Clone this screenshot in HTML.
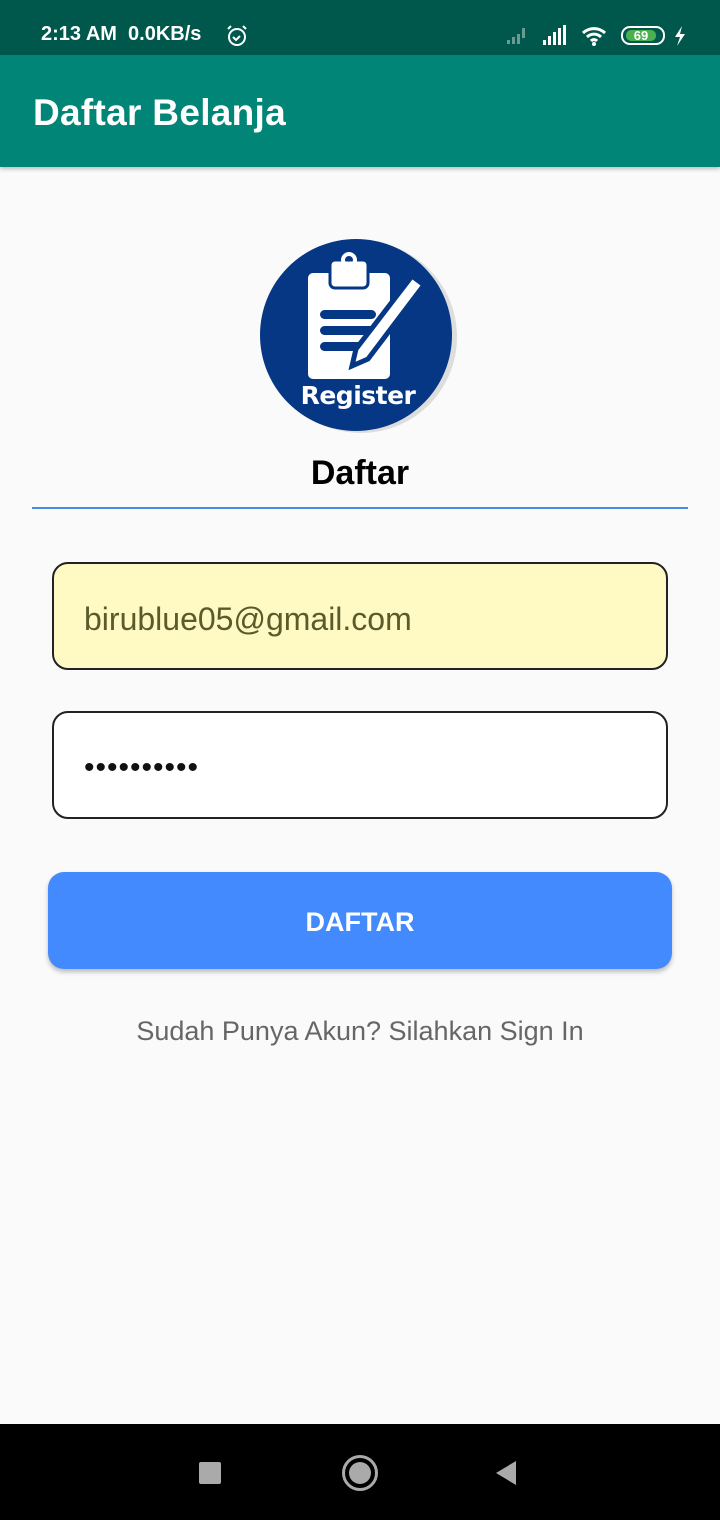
<!DOCTYPE html>
<html><head><meta charset="utf-8"><style>
*{margin:0;padding:0;box-sizing:border-box}
body{width:720px;height:1520px;background:#fafafa;font-family:"Liberation Sans",sans-serif;position:relative;overflow:hidden}
.sb{position:absolute;top:0;left:0;width:720px;height:55px;background:#00574b;color:#fff;font-weight:bold;font-size:20px}
.ab{position:absolute;top:55px;left:0;width:720px;height:112px;background:#008577;box-shadow:0 2px 4px rgba(0,0,0,.25)}
.ab span{position:absolute;left:33px;top:37px;color:#fff;font-size:37px;font-weight:bold;letter-spacing:0.3px}
.field{position:absolute;left:52px;width:616px;height:108px;border:2px solid #222;border-radius:16px;font-size:32px;padding-left:30px;line-height:110px}
.nav{position:absolute;top:1424px;left:0;width:720px;height:96px;background:#000}
</style></head><body>
<div class="sb">
<span style="position:absolute;left:41px;top:23px">2:13 AM&nbsp; 0.0KB/s</span>
<svg style="position:absolute;left:225px;top:24px" width="24" height="24" viewBox="0 0 24 24" fill="none" stroke="#fff" stroke-width="2"><circle cx="12" cy="13" r="8"/><path d="M8 13l3 3 4-4M3 5l3-3M21 5l-3-3"/></svg>
<svg style="position:absolute;left:505px;top:24px" width="185" height="24" viewBox="0 0 185 24">
<g fill="#6a9a92"><rect x="2" y="16" width="3" height="4"/><rect x="7" y="13" width="3" height="7"/><rect x="12" y="10" width="3" height="10"/><rect x="17" y="4" width="3" height="10"/></g>
<g fill="#fff"><rect x="38" y="16" width="3" height="5"/><rect x="43" y="12" width="3" height="9"/><rect x="48" y="8" width="3" height="13"/><rect x="53" y="4" width="3" height="17"/><rect x="58" y="1" width="3" height="20"/></g>
<path d="M78 9a16 16 0 0 1 22 0M82 13a10 10 0 0 1 14 0M86 17a4 4 0 0 1 6 0" stroke="#fff" stroke-width="3" fill="none"/><circle cx="89" cy="20" r="2" fill="#fff"/>
<rect x="117" y="3" width="42" height="17" rx="8" fill="none" stroke="#fff" stroke-width="2"/><rect x="121" y="6" width="30" height="11" rx="5" fill="#4caf50"/>
<text x="136" y="16" font-size="13" fill="#fff" font-weight="bold" font-family="Liberation Sans" text-anchor="middle">69</text>
<path d="M177 2l-7 11h5l-3 9 8-12h-5z" fill="#fff"/></svg>
</div>
<div class="ab"><span>Daftar Belanja</span></div>
<svg style="position:absolute;left:258px;top:238px" width="204" height="198" viewBox="0 0 204 198">
<circle cx="103" cy="99" r="96" fill="#ddd"/><circle cx="98" cy="97" r="96" fill="#063785"/>
<rect x="50" y="35" width="82" height="106" rx="5" fill="#fff"/>
<rect x="72" y="22" width="38" height="28" rx="5" fill="#fff" stroke="#063785" stroke-width="3"/><circle cx="91" cy="22" r="6" fill="none" stroke="#fff" stroke-width="4"/>
<g fill="#063785"><rect x="62" y="72" width="56" height="9" rx="4.5"/><rect x="62" y="88" width="56" height="9" rx="4.5"/><rect x="62" y="104" width="44" height="9" rx="4.5"/></g>
<path d="M154 38l12 9-56 74-16 7 4-17z" fill="#fff" stroke="#063785" stroke-width="5"/>
<text x="100" y="166" font-size="25" fill="#fff" font-weight="bold" font-family="DejaVu Sans" text-anchor="middle" letter-spacing="-0.5">Register</text></svg>
<div style="position:absolute;top:454px;left:0;width:720px;text-align:center;font-size:34px;font-weight:bold">Daftar</div>
<div style="position:absolute;top:507px;left:32px;width:656px;height:2px;background:#4a8ae0"></div>
<div class="field" style="top:562px;background:#fff9c4;color:#5a5a2a">birublue05@gmail.com</div>
<div class="field" style="top:711px;background:#fff;color:#111;font-size:30px;letter-spacing:1px">••••••••••</div>
<div style="position:absolute;top:872px;left:48px;width:624px;height:97px;background:#448aff;border-radius:16px;color:#fff;font-weight:bold;font-size:27px;text-align:center;line-height:100px;box-shadow:0 3px 5px rgba(0,0,0,.25)">DAFTAR</div>
<div style="position:absolute;top:1016px;left:0;width:720px;text-align:center;font-size:27px;color:#666">Sudah Punya Akun? Silahkan Sign In</div>
<div class="nav">
<div style="position:absolute;left:199px;top:38px;width:22px;height:22px;background:#aaa;border-radius:2px"></div>
<div style="position:absolute;left:342px;top:31px;width:36px;height:36px;border:3px solid #aaa;border-radius:50%"><div style="margin:4px;width:22px;height:22px;background:#aaa;border-radius:50%"></div></div>
<svg style="position:absolute;left:494px;top:36px" width="24" height="26"><path d="M22 1v24L2 13z" fill="#aaa"/></svg>
</div>
</body></html>
